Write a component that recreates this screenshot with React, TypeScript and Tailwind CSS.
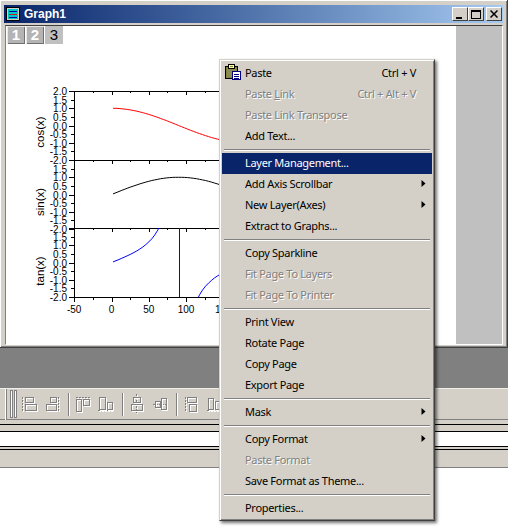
import React from "react";

const font = "font-['Liberation_Sans',Arial,sans-serif]";
const menuFont = "font-['Noto_Sans','Liberation_Sans',Arial,sans-serif]";

type Row =
  | { sep: true }
  | { sep?: false; label: React.ReactNode; shortcut?: string; disabled?: boolean; active?: boolean; arrow?: boolean; icon?: boolean };

const rows: Row[] = [
  { label: "Paste", shortcut: "Ctrl + V", icon: true },
  { label: <>Paste <span className="underline">L</span>ink</>, shortcut: "Ctrl + Alt + V", disabled: true },
  { label: "Paste Link Transpose", disabled: true },
  { label: "Add Text..." },
  { sep: true },
  { label: "Layer Management...", active: true },
  { label: "Add Axis Scrollbar", arrow: true },
  { label: "New Layer(Axes)", arrow: true },
  { label: "Extract to Graphs..." },
  { sep: true },
  { label: "Copy Sparkline" },
  { label: "Fit Page To Layers", disabled: true },
  { label: "Fit Page To Printer", disabled: true },
  { sep: true },
  { label: "Print View" },
  { label: "Rotate Page" },
  { label: "Copy Page" },
  { label: "Export Page" },
  { sep: true },
  { label: "Mask", arrow: true },
  { sep: true },
  { label: "Copy Format", arrow: true },
  { label: "Paste Format", disabled: true },
  { label: "Save Format as Theme..." },
  { sep: true },
  { label: "Properties..." },
];

function ClipboardIcon() {
  return (
    <svg className="absolute left-[3px] top-[1px]" width="16" height="17" viewBox="0 0 16 17" shapeRendering="crispEdges">
      <rect x="0.5" y="2.5" width="12" height="12" fill="#808040" stroke="#000" />
      <rect x="2" y="4" width="9" height="9" fill="#8c8c50" />
      <rect x="3.5" y="0.5" width="6" height="4" fill="#ffff99" stroke="#000" />
      <rect x="5" y="2" width="3" height="1" fill="#808040" />
      <rect x="7.5" y="7.5" width="8" height="8" fill="#fff" stroke="#000080" />
      <rect x="9" y="10" width="5" height="1" fill="#000080" />
      <rect x="9" y="12" width="5" height="1" fill="#000080" />
      <rect x="9" y="14" width="5" height="1" fill="#000080" />
    </svg>
  );
}

function ContextMenu() {
  return (
    <div className={`absolute left-[219px] top-[59px] w-[216px] border border-[#d4d0c8] border-r-[#404040] border-b-[#404040] bg-[#d4d0c8] px-[2px] pt-[3px] pb-[1px] shadow-[inset_1px_1px_0_#fff,inset_-1px_-1px_0_#808080,2px_2px_3px_rgba(0,0,0,0.55)] ${menuFont}`}>
      {rows.map((r, i) =>
        r.sep ? (
          <div key={i} className="flex h-[6px] items-center px-[2px]">
            <div className="h-[2px] w-full border-t border-b border-t-[#808080] border-b-white" />
          </div>
        ) : (
          <div
            key={i}
            className={`relative flex h-[21px] items-center pb-[2px] pl-[23px] pr-[16px] text-[11px] leading-[19px] tracking-[-0.3px] ${
              r.active ? "bg-[#0a246a] text-white" : r.disabled ? "text-[#808080] [text-shadow:1px_1px_0_#fff]" : "text-black"
            }`}
          >
            {r.icon && <ClipboardIcon />}
            <span className="flex-1 whitespace-nowrap">{r.label}</span>
            {r.shortcut && <span className="whitespace-nowrap">{r.shortcut}</span>}
            {r.arrow && (
              <svg className="absolute right-[6px] top-[5px]" width="5" height="9" viewBox="0 0 5 9">
                <path d="M0.5 1 L4.5 4.5 L0.5 8 Z" fill="#000" />
              </svg>
            )}
          </div>
        )
      )}
    </div>
  );
}

const sx = (x: number) => 111.5 + x * 0.746;
const sy = (top: number, v: number) => top + (2 - v) * 17.25;

function curve(fn: (d: number) => number, top: number, from: number, to: number, step = 4) {
  const pts: string[] = [];
  for (let d = from; d <= to; d += step) pts.push(`${sx(d).toFixed(1)},${sy(top, fn(d)).toFixed(1)}`);
  return pts.join(" ");
}

const rad = (d: number) => (d * Math.PI) / 180;
const yVals = ["2.0", "1.5", "1.0", "0.5", "0.0", "-0.5", "-1.0", "-1.5", "-2.0"];

function Panel({ top, title, titleY }: { top: number; title: string; titleY: number }) {
  const height = 69;
  return (
    <g>
      <line x1="74.5" x2="225" y1={top + 0.5} y2={top + 0.5} stroke="#000" />
      <line x1="74.5" x2="74.5" y1={top} y2={top + height} stroke="#000" />
      {yVals.map((v, i) => {
        const y = Math.round(top + i * 8.625) + 0.5;
        return (
          <g key={v}>
            <line x1={i % 2 ? 71 : 69} x2="74" y1={y} y2={y} stroke="#000" />
            {(top === 90 || i > 0) && (
              <text x="67" y={y + 3.5} textAnchor="end" fontSize="10" fill="#000">{v}</text>
            )}
          </g>
        );
      })}
      {[-50, -25, 0, 25, 50, 75, 100, 125, 150].map((t, i) => {
        const x = Math.round(sx(t)) + 0.5;
        return <line key={t} x1={x} x2={x} y1={top} y2={top + (i % 2 ? 2 : 4)} stroke="#000" />;
      })}
      <text transform={`translate(44 ${titleY}) rotate(-90)`} textAnchor="middle" fontSize="11.5" fill="#000">{title}</text>
    </g>
  );
}

function GraphPlot() {
  return (
    <svg className={`block ${font}`} width="450" height="300" viewBox="6 44 450 300">
      <defs>
        <clipPath id="tanclip"><rect x="74" y="227" width="160" height="69" /></clipPath>
      </defs>
      <Panel top={90} title="cos(x)" titleY={131} />
      <Panel top={159} title="sin(x)" titleY={201} />
      <Panel top={227} title="tan(x)" titleY={270} />
      <line x1="74" x2="225" y1="296.5" y2="296.5" stroke="#000" />
      {[-50, -25, 0, 25, 50, 75, 100, 125, 150].map((t, i) => {
        const x = Math.round(sx(t)) + 0.5;
        return <line key={t} x1={x} x2={x} y1="296" y2={i % 2 ? 299 : 301} stroke="#000" />;
      })}
      {[-50, 0, 50, 100, 150].map((t) => (
        <text key={t} x={sx(t)} y="312" textAnchor="middle" fontSize="10" fill="#000">{t}</text>
      ))}
      <polyline points={curve((d) => Math.cos(rad(d)), 90, 2, 150)} fill="none" stroke="#ff0000" />
      <polyline points={curve((d) => Math.sin(rad(d)), 159, 2, 150)} fill="none" stroke="#000" />
      <g clipPath="url(#tanclip)">
        <polyline points={curve((d) => Math.tan(rad(d)), 227, 2, 70)} fill="none" stroke="#0000ff" />
        <polyline points={curve((d) => Math.tan(rad(d)), 227, 110, 150)} fill="none" stroke="#0000ff" />
      </g>
      <line x1="179.5" x2="179.5" y1="227" y2="296" stroke="#0000ff" />
    </svg>
  );
}

function LayerTab({ n, active }: { n: number; active?: boolean }) {
  return (
    <div
      className={`flex h-[18px] w-[18px] items-center justify-center text-[15px] ${font} ${
        active
          ? "bg-[#c0c0c0] font-normal text-black"
          : "bg-[#b4b4b4] font-bold text-white shadow-[inset_1px_1px_0_#e8e8e8,inset_-1px_-1px_0_#707070]"
      }`}
    >
      {n}
    </div>
  );
}

function CaptionButton({ children, ml }: { children: React.ReactNode; ml: string }) {
  return (
    <div className={`flex h-[14px] w-[16px] items-center justify-center border border-t-white border-l-white border-r-[#404040] border-b-[#404040] bg-[#d4d0c8] ${ml}`}>
      {children}
    </div>
  );
}

function GraphWindow() {
  return (
    <div className="h-[348px] border-b border-b-[#404040] border-r border-r-[#404040] bg-[#d4d0c8] pl-[4px] pr-[4px] pt-[5px] shadow-[inset_1px_1px_0_#fff,inset_-1px_-1px_0_#808080]">
      <div className="flex h-[18px] items-center bg-gradient-to-r from-[#0a246a] to-[#a6caf0] pl-[2px] pr-[1px]">
        <svg width="14" height="14" viewBox="0 0 14 14" shapeRendering="crispEdges">
          <rect x="0.5" y="0.5" width="13" height="13" fill="#d4d0c8" stroke="#000" />
          <rect x="2" y="2" width="10" height="10" fill="#00c8c8" />
          <rect x="3" y="4" width="8" height="1" fill="#0000a0" />
          <rect x="3" y="7" width="8" height="1" fill="#c02020" />
          <rect x="3" y="10" width="8" height="1" fill="#0000a0" />
        </svg>
        <span className={`ml-[4px] flex-1 text-[12px] font-bold text-white ${font}`}>Graph1</span>
        <CaptionButton ml="">
          <div className="mt-[7px] mr-[2px] h-[2px] w-[6px] bg-black" />
        </CaptionButton>
        <CaptionButton ml="">
          <div className="h-[9px] w-[10px] border border-t-2 border-black" />
        </CaptionButton>
        <CaptionButton ml="ml-[2px]">
          <svg width="8" height="8" viewBox="0 0 8 8"><path d="M0.5 0.5 L7.5 7.5 M7.5 0.5 L0.5 7.5" stroke="#000" strokeWidth="1.5" /></svg>
        </CaptionButton>
      </div>
      <div className="mt-[2px] ml-[1px] flex h-[320px] border-t border-l border-t-[#404040] border-l-[#808080] border-b border-r border-b-white border-r-white">
        <div className="w-[450px] bg-white">
          <div className="flex h-[19px] gap-[1px] pl-[1px]">
            <LayerTab n={1} />
            <LayerTab n={2} />
            <LayerTab n={3} active />
          </div>
          <GraphPlot />
        </div>
        <div className="flex-1 bg-[#c0c0c0]" />
      </div>
    </div>
  );
}

type Box = [number, number, number, number];
type Dash = [number, number, number, number];

function AlignIcon({ boxes, dash }: { boxes: Box[]; dash: Dash }) {
  return (
    <>
      <line x1={dash[0] + 1} y1={dash[1] + 1} x2={dash[2] + 1} y2={dash[3] + 1} stroke="#fff" strokeDasharray="2 1" />
      <line x1={dash[0]} y1={dash[1]} x2={dash[2]} y2={dash[3]} stroke="#808080" strokeDasharray="2 1" />
      {boxes.map((b, i) => (
        <g key={i}>
          <rect x={b[0] + 1} y={b[1] + 1} width={b[2]} height={b[3]} fill="none" stroke="#fff" />
          <rect x={b[0]} y={b[1]} width={b[2]} height={b[3]} fill="none" stroke="#808080" />
        </g>
      ))}
    </>
  );
}

const icons: { boxes: Box[]; dash: Dash }[] = [
  { boxes: [[25.5, 397.5, 8, 5], [25.5, 404.5, 11, 6]], dash: [22.5, 397, 22.5, 412] },
  { boxes: [[50.5, 397.5, 6, 5], [46.5, 404.5, 10, 6]], dash: [58.5, 397, 58.5, 412] },
  { boxes: [[76.5, 399.5, 5, 12], [83.5, 399.5, 6, 6]], dash: [76, 397.5, 91, 397.5] },
  { boxes: [[99.5, 397.5, 6, 12], [107.5, 402.5, 5, 7]], dash: [98, 410.5, 113, 410.5] },
  { boxes: [[133.5, 397.5, 7, 5], [131.5, 404.5, 11, 6]], dash: [136.5, 394, 136.5, 413] },
  { boxes: [[155.5, 401.5, 5, 6], [161.5, 398.5, 5, 11]], dash: [153, 404.5, 168, 404.5] },
  { boxes: [[187.5, 397.5, 9, 5], [189.5, 404.5, 7, 7]], dash: [185.5, 397, 185.5, 412] },
  { boxes: [[208.5, 398.5, 5, 11], [215.5, 401.5, 6, 8]], dash: [207, 410.5, 222, 410.5] },
];

function Toolbar() {
  return (
    <div className="h-[32px] border-t border-t-[#f0eee8] border-b border-b-[#808080] bg-[#d4d0c8]">
      <svg className="block" width="225" height="31" viewBox="0 389 225 31" shapeRendering="crispEdges">
        <line x1="5.5" x2="5.5" y1="389" y2="420" stroke="#fff" />
        <line x1="6.5" x2="6.5" y1="389" y2="420" stroke="#808080" />
        <rect x="10.5" y="390.5" width="2" height="27" fill="none" stroke="#808080" />
        <rect x="14.5" y="390.5" width="2" height="27" fill="none" stroke="#808080" />
        <line x1="11.5" x2="11.5" y1="391" y2="417" stroke="#fff" />
        <line x1="15.5" x2="15.5" y1="391" y2="417" stroke="#fff" />
        {[68, 122, 176].map((x) => (
          <g key={x}>
            <line x1={x + 0.5} x2={x + 0.5} y1="393" y2="416" stroke="#808080" />
            <line x1={x + 1.5} x2={x + 1.5} y1="393" y2="416" stroke="#fff" />
          </g>
        ))}
        {icons.map((ic, i) => (
          <AlignIcon key={i} boxes={ic.boxes} dash={ic.dash} />
        ))}
      </svg>
    </div>
  );
}

export default function App() {
  return (
    <div className={`relative h-[528px] w-[508px] overflow-hidden bg-white ${font}`}>
      <GraphWindow />
      <div className="h-[40px] bg-[#808080]" />
      <Toolbar />
      <div className="h-[4px] bg-[#d4d0c8]" />
      <div className="h-[1px] bg-black" />
      <div className="h-[6px] bg-[#d4d0c8]" />
      <div className="h-[1px] bg-black" />
      <div className="h-[14px] bg-white" />
      <div className="h-[1px] bg-black" />
      <div className="h-[2px] bg-[#d4d0c8]" />
      <div className="h-[1px] bg-black" />
      <div className="h-[18px] border-b border-b-[#808080] bg-[#d4d0c8]" />
      <ContextMenu />
    </div>
  );
}
